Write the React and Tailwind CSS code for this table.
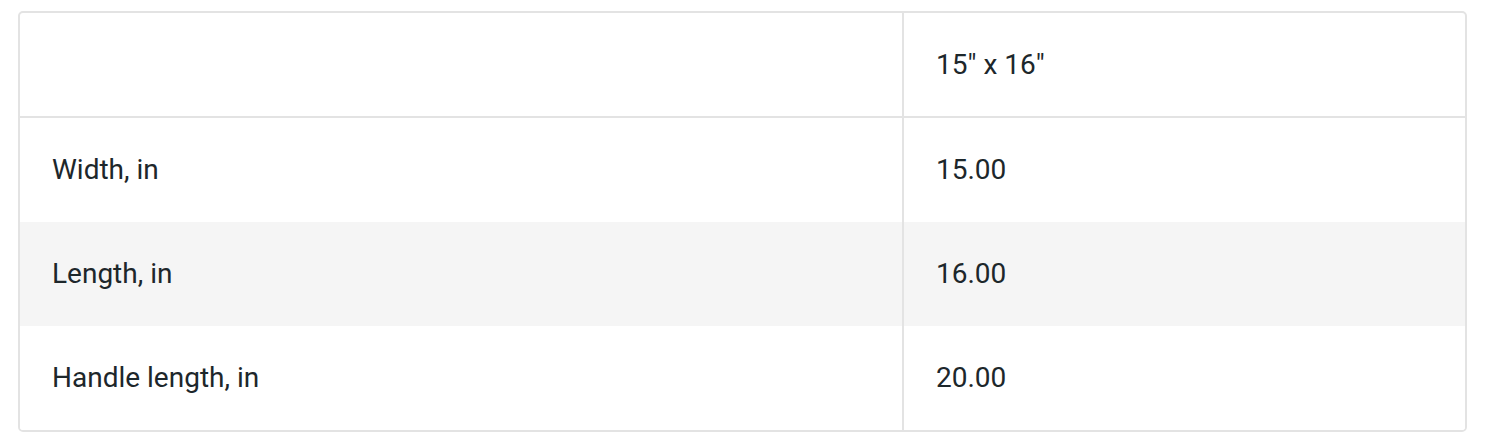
import React from 'react';

const rows = [
  { label: 'Width, in', value: '15.00' },
  { label: 'Length, in', value: '16.00' },
  { label: 'Handle length, in', value: '20.00' },
];

const App = () => {
  return (
    <div className="bg-white w-[1490px] h-[448px] pl-[18px] pt-[11px]" style={{ fontFamily: 'Roboto, sans-serif' }}>
      <div className="w-[1449px] border-2 border-[#e3e3e3] rounded-[5px] overflow-hidden text-[28px] text-[#1d272b]">
        <div className="grid grid-cols-[884px_1fr] h-[105px] border-b-2 border-[#e3e3e3]">
          <div className="border-r-2 border-[#e3e3e3]" />
          <div className="flex items-center pl-[32px]">15&quot; x 16&quot;</div>
        </div>
        {rows.map((row, i) => (
          <div
            key={row.label}
            className={`grid grid-cols-[884px_1fr] h-[104px] ${i === 1 ? 'bg-[#f5f5f5]' : 'bg-white'}`}
          >
            <div className="flex items-center pl-[32px] border-r-2 border-[#e3e3e3]">{row.label}</div>
            <div className="flex items-center pl-[32px]">{row.value}</div>
          </div>
        ))}
      </div>
    </div>
  );
};

export default App;
